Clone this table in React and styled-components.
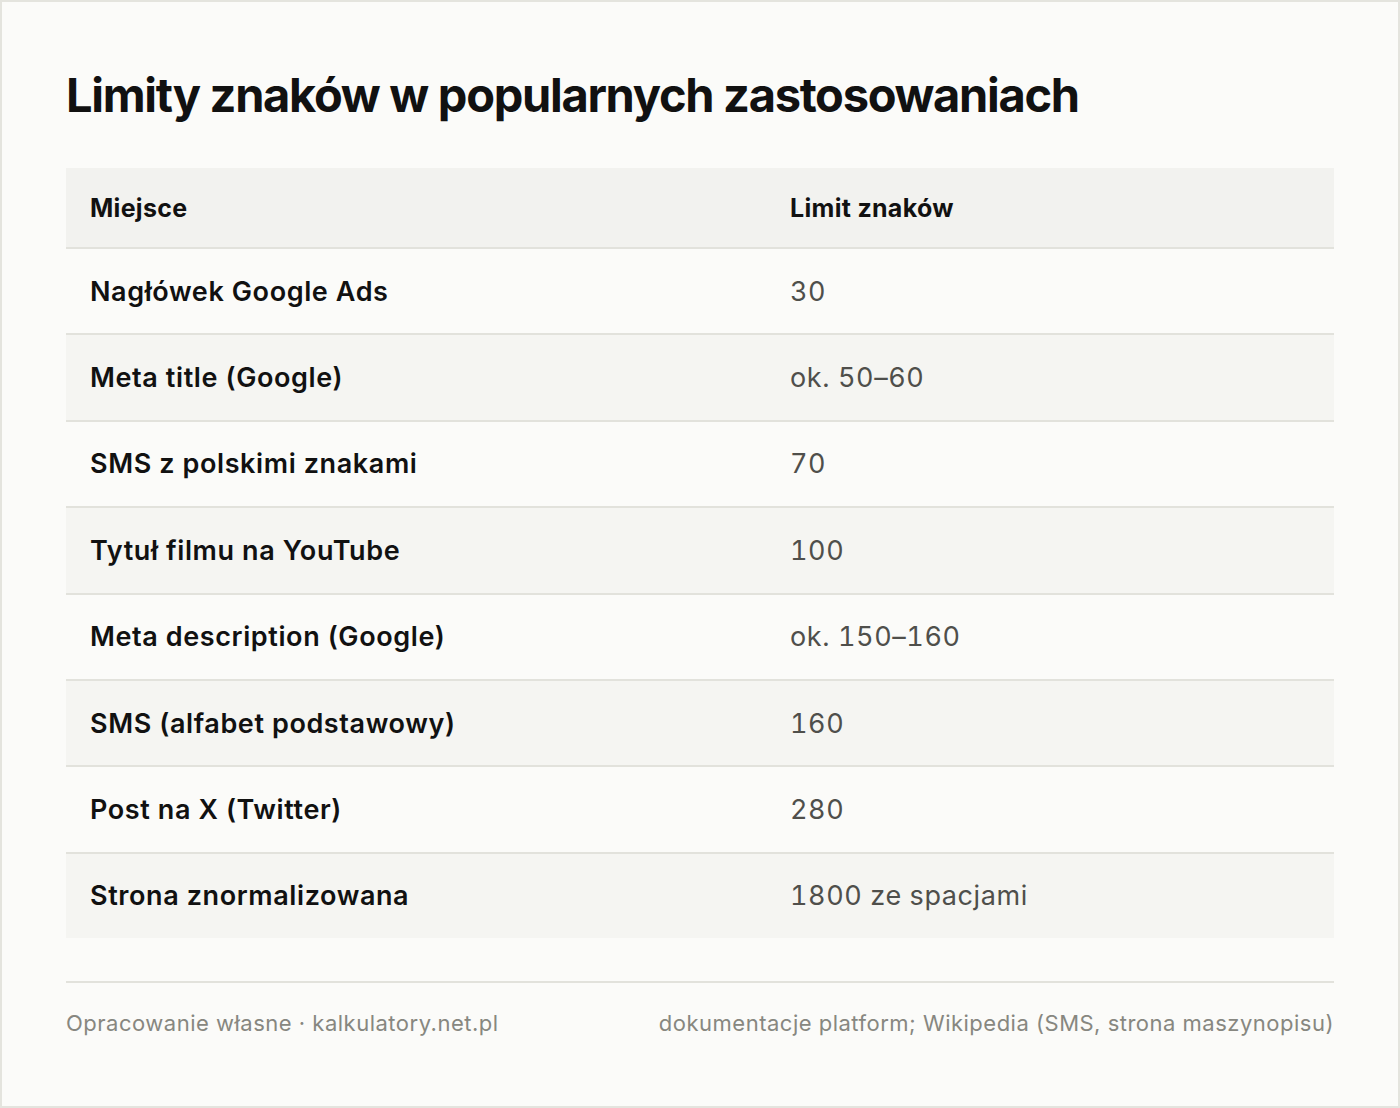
import React from 'react';
import styled, { createGlobalStyle } from 'styled-components';

const GlobalStyle = createGlobalStyle`
  body {
    margin: 0;
    background: #fbfbf9;
    font-family: 'Inter', 'Liberation Sans', sans-serif;
  }
`;

const Card = styled.div`
  box-sizing: border-box;
  width: 1400px;
  height: 1108px;
  border: 2px solid #e4e4de;
  background: #fbfbf9;
  padding: 62px 64px 0 64px;
  display: flex;
  flex-direction: column;
`;

const Title = styled.h1`
  margin: 0 0 42px 0;
  font-size: 47px;
  line-height: 62px;
  font-weight: 700;
  color: #111111;
  letter-spacing: -1.3px;
`;

const Table = styled.table`
  width: 100%;
  border-collapse: collapse;
`;

const HeadCell = styled.th`
  text-align: left;
  background: #f2f2ef;
  height: 80px;
  padding: 0 24px;
  font-size: 25px;
  font-weight: 700;
  letter-spacing: 0.3px;
  color: #111111;
  border-bottom: 2px solid #e2e2dc;
  width: ${({ $w }) => $w || 'auto'};
  box-sizing: border-box;
`;

const Row = styled.tr`
  background: ${({ $striped }) => ($striped ? '#f5f5f2' : 'transparent')};
  border-bottom: ${({ $last }) => ($last ? 'none' : '2px solid #e2e2dc')};
`;

const NameCell = styled.td`
  height: 84.4px;
  padding: 0 24px;
  font-size: 27px;
  font-weight: 600;
  letter-spacing: 0.6px;
  color: #111111;
`;

const ValueCell = styled.td`
  height: 84.4px;
  padding: 0 24px;
  font-size: 27px;
  font-weight: 400;
  letter-spacing: 0.6px;
  font-variant-numeric: tabular-nums;
  color: #4f4f4b;
`;

const Footer = styled.div`
  margin-top: 43px;
  border-top: 2px solid #e2e2dc;
  padding-top: 27px;
  display: flex;
  justify-content: space-between;
  font-size: 22px;
  letter-spacing: 0.5px;
  color: #878780;
`;

const rows = [
  ['Nagłówek Google Ads', '30'],
  ['Meta title (Google)', 'ok. 50–60'],
  ['SMS z polskimi znakami', '70'],
  ['Tytuł filmu na YouTube', '100'],
  ['Meta description (Google)', 'ok. 150–160'],
  ['SMS (alfabet podstawowy)', '160'],
  ['Post na X (Twitter)', '280'],
  ['Strona znormalizowana', '1800 ze spacjami'],
];

export default function App() {
  return (
    <>
      <GlobalStyle />
      <Card>
        <Title>Limity znaków w popularnych zastosowaniach</Title>
        <Table>
          <thead>
            <tr>
              <HeadCell $w="700px">Miejsce</HeadCell>
              <HeadCell>Limit znaków</HeadCell>
            </tr>
          </thead>
          <tbody>
            {rows.map(([name, value], i) => (
              <Row key={name} $striped={i % 2 === 1} $last={i === rows.length - 1}>
                <NameCell>{name}</NameCell>
                <ValueCell>{value}</ValueCell>
              </Row>
            ))}
          </tbody>
        </Table>
        <Footer>
          <span>Opracowanie własne · kalkulatory.net.pl</span>
          <span>dokumentacje platform; Wikipedia (SMS, strona maszynopisu)</span>
        </Footer>
      </Card>
    </>
  );
}
